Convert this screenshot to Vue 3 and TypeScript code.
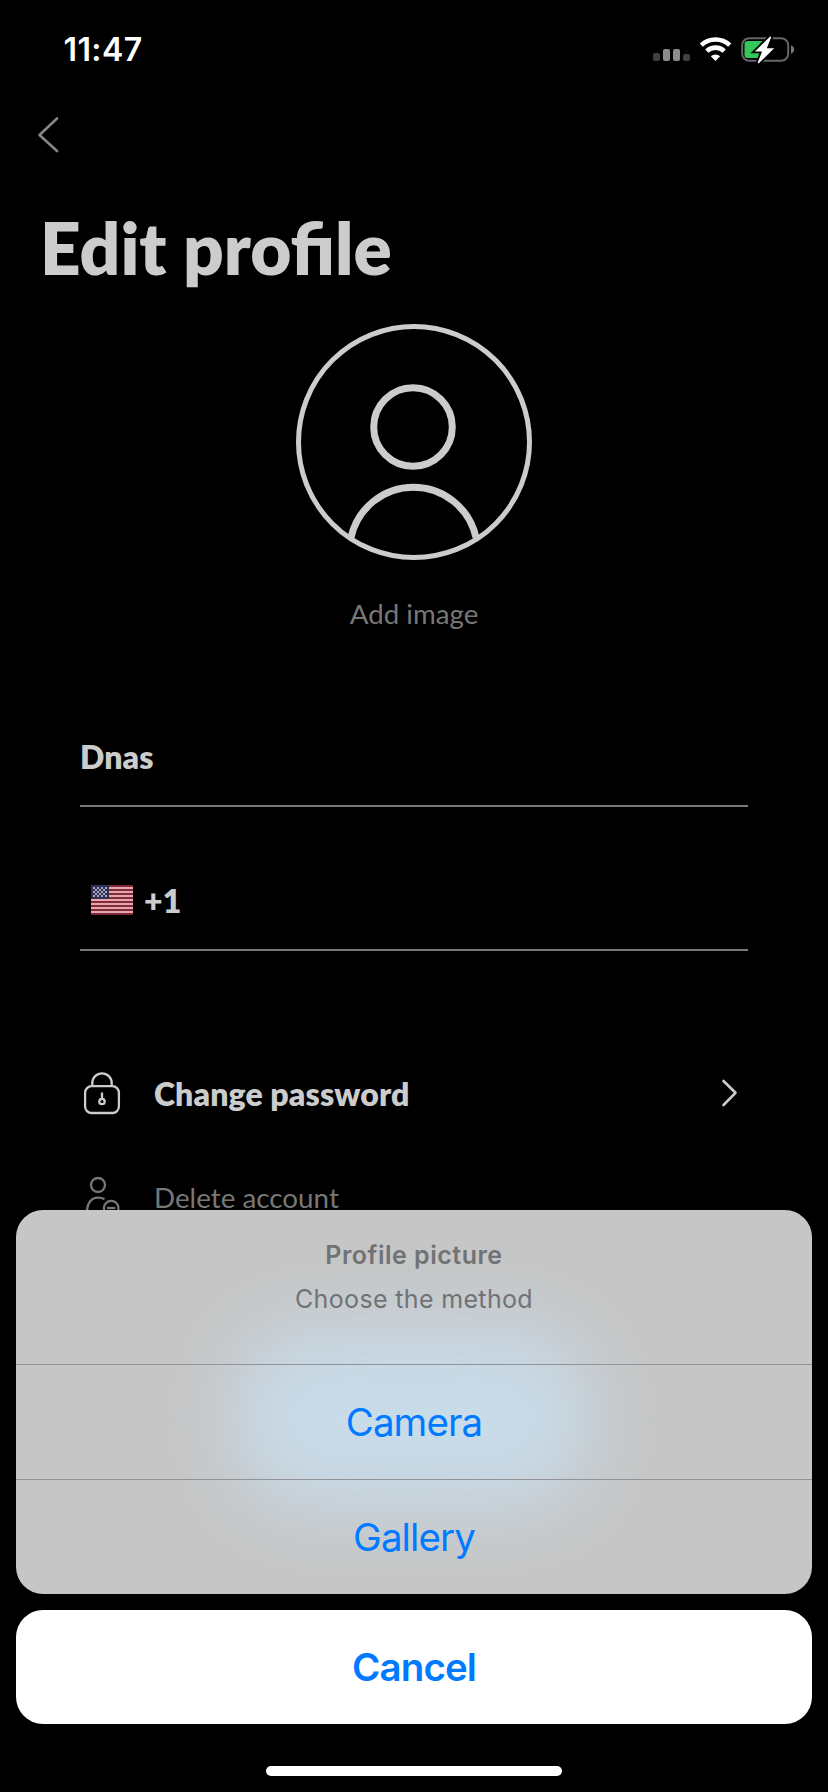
<script setup lang="ts">
interface SheetAction {
  id: string
  label: string
}

const time = '11:47'
const name = 'Dnas'
const dialCode = '+1'
const actions: SheetAction[] = [
  { id: 'camera', label: 'Camera' },
  { id: 'gallery', label: 'Gallery' },
]

const stripes = Array.from({ length: 7 }, (_, i) => 2 + i * 4)
const stars: { x: number; y: number }[] = []
for (let row = 0; row < 5; row++) {
  for (let col = 0; col < 7; col++) {
    if ((row + col) % 2 === 0) stars.push({ x: 2 + col * 2, y: 2 + row * 2 })
  }
}
</script>

<template>
  <div class="screen">
    <header class="status">
      <span class="time">{{ time }}</span>
      <svg class="indicators" width="148" height="32" viewBox="0 0 148 32">
        <g>
          <rect x="1" y="17" width="7" height="8" rx="2" fill="#404040" />
          <rect x="11" y="13" width="7" height="12" rx="2" fill="#8c8c8c" />
          <rect x="21" y="13" width="7" height="12" rx="2" fill="#8c8c8c" />
          <rect x="31" y="18" width="7" height="7" rx="2" fill="#404040" />
        </g>
        <g fill="none" stroke="#fff" stroke-width="4.6">
          <path d="M49.3 9.2a20.5 20.5 0 0 1 28.4 0" />
          <path d="M54.8 15.1a12.6 12.6 0 0 1 17.4 0" />
        </g>
        <path d="M63.5 25l-4.7-4.700a6.800 6.800 0 0 1 9.400 0z" fill="#fff" />
        <rect x="90.2" y="2.2" width="46" height="22.6" rx="7" fill="none" stroke="#666" stroke-width="2" />
        <path d="M139 9.2q3.2 1.4 3.2 4.3t-3.2 4.3z" fill="#777" />
        <path d="M95.500 5h15l-9 11.500h7.200l-1.500 5.500h-11.700q-3 0-3-3v-11q0-3 3-3z" fill="#34c759" />
        <path d="M117.800.8l-15 14.600h7.200l-4.200 10.900q-.2 1.500 1.200.8l15.200-14.900h-7.400l4.300-10.600q.1-1.600-1.300-.8z" fill="#fff" stroke="#000" stroke-width="3.500" paint-order="stroke" />
      </svg>
    </header>

    <nav class="nav">
      <svg class="back" width="28" height="44" viewBox="0 0 28 44" fill="none">
        <path d="M21 5.500L3.500 22l17.500 16" stroke="#858585" stroke-width="2.600" stroke-linecap="round" stroke-linejoin="round" />
      </svg>
    </nav>

    <h1 class="title">Edit profile</h1>

    <section class="avatar">
      <svg width="236" height="236" viewBox="0 0 236 236" fill="none" stroke="#ccc">
        <circle cx="118" cy="118" r="115.500" stroke-width="5" />
        <circle cx="117" cy="103" r="39.300" stroke-width="7" />
        <path d="M55 213.500a64 64 0 0 1 125 0" stroke-width="7" />
      </svg>
      <span class="add-image">Add image</span>
    </section>

    <section class="form">
      <div class="field name-field">{{ name }}</div>
      <div class="field phone-field">
        <svg class="flag" width="42" height="30" viewBox="0 0 42 30" shape-rendering="crispEdges">
          <rect width="42" height="30" fill="#7f2c39" />
          <rect v-for="y in stripes" :key="y" x="0" :y="y" width="42" height="2" fill="#e8a5ad" />
          <rect width="18" height="14" fill="#303056" />
          <rect v-for="s in stars" :key="`${s.x}-${s.y}`" :x="s.x" :y="s.y" width="2" height="2" fill="#a6a5bb" />
        </svg>
        <span>{{ dialCode }}</span>
      </div>
    </section>

    <section class="links">
      <div class="link password">
        <svg class="link-icon" width="40" height="44" viewBox="0 0 40 44" fill="none" stroke="#ccc" stroke-width="2.300">
          <rect x="3.100" y="14.200" width="33.800" height="26.800" rx="6.500" />
          <path d="M10.300 14v-3a9.700 9.700 0 0 1 19.400 0v3" />
          <circle cx="20" cy="29.500" r="2.700" />
          <path d="M20 26.500v-6" />
        </svg>
        <span class="link-label">Change password</span>
        <svg class="chevron" width="20" height="32" viewBox="0 0 20 32" fill="none">
          <path d="M3.500 3l12 11.800-12 12.200" stroke="#ccc" stroke-width="2.600" stroke-linecap="round" stroke-linejoin="round" />
        </svg>
      </div>
      <div class="link delete">
        <svg class="link-icon" width="40" height="44" viewBox="0 0 40 44" fill="none" stroke="#777" stroke-width="2.300">
          <circle cx="16" cy="9" r="7" />
          <path d="M5 36c0-9 4.500-14.300 11-14.300q3.500 0 6.500 1.400" />
          <circle cx="29.200" cy="32.200" r="7.300" />
          <path d="M25 32h8.400" />
        </svg>
        <span class="link-label">Delete account</span>
      </div>
    </section>

    <div class="overlay">
      <div class="sheet">
        <div class="sheet-head">
          <span class="sheet-title">Profile picture</span>
          <span class="sheet-text">Choose the method</span>
        </div>
        <button v-for="a in actions" :key="a.id" :class="['action', a.id]" type="button"><span>{{ a.label }}</span></button>
      </div>
      <button class="action cancel" type="button"><span>Cancel</span></button>
      <div class="home"></div>
    </div>
  </div>
</template>

<style>
html,
body {
  background: #000;
}
</style>

<style scoped>
.screen {
  position: relative;
  width: 828px;
  height: 1792px;
  overflow: hidden;
  display: flex;
  flex-direction: column;
  background: #000;
  color: #ccc;
  font-family: Lato, sans-serif;
}
.status {
  height: 96px;
  flex: none;
  box-sizing: border-box;
  padding: 34px 28px 0 63.5px;
  display: flex;
  justify-content: space-between;
  align-items: flex-start;
}
.time {
  font: 600 32px/32px Inter, sans-serif;
  letter-spacing: 0.4px;
  color: #fff;
}
.indicators {
  margin-top: 2px;
}
.nav {
  height: 112px;
  flex: none;
  box-sizing: border-box;
  padding: 17px 0 0 36px;
}
.back {
  display: block;
}
.title {
  margin: 0;
  height: 116px;
  flex: none;
  padding-left: 40px;
  font-size: 71px;
  font-weight: 800;
  line-height: 80px;
}
.avatar {
  height: 401px;
  flex: none;
  display: flex;
  flex-direction: column;
  align-items: center;
}
.add-image {
  margin-top: 36px;
  font-size: 27.7px;
  line-height: 36px;
  color: #777;
}
.form {
  padding: 0 80px;
  flex: none;
}
.field {
  box-sizing: border-box;
  border-bottom: 2px solid #777;
  font-size: 32px;
  font-weight: 800;
  line-height: 40px;
  letter-spacing: 0.12px;
}
.name-field {
  height: 82px;
  padding-top: 12px;
}
.phone-field {
  height: 144px;
  padding: 74px 0 0 11px;
  display: flex;
  align-items: flex-start;
  gap: 11px;
}
.flag {
  margin-top: 4px;
}
.links {
  padding: 119px 80px 0;
  flex: none;
}
.link {
  height: 48px;
  display: flex;
  align-items: center;
}
.link-icon {
  margin-left: 2px;
  flex: none;
}
.link-label {
  margin: 0 0 2px 32px;
  flex: 1;
  font-size: 32px;
  font-weight: 800;
  letter-spacing: 0.12px;
  white-space: nowrap;
}
.chevron {
  margin-right: 8px;
}
.delete {
  margin-top: 56px;
}
.delete .link-label {
  font-size: 27.8px;
  font-weight: 400;
  letter-spacing: 0;
  color: #777;
}
.overlay {
  position: absolute;
  inset: 1210px 16px 0;
  display: flex;
  flex-direction: column;
  font-family: Inter, sans-serif;
}
.sheet {
  position: relative;
  isolation: isolate;
  height: 384px;
  overflow: hidden;
  border-radius: 27px;
  display: flex;
  flex-direction: column;
  background: #c6c6c6;
}
.sheet::before {
  content: '';
  position: absolute;
  z-index: -1;
  left: 218px;
  top: 118px;
  width: 356px;
  height: 180px;
  border-radius: 70px;
  background: #c8dbe9;
  filter: blur(40px);
}
.sheet-head {
  height: 154px;
  flex: none;
  display: flex;
  flex-direction: column;
  align-items: center;
  padding-top: 27px;
  box-sizing: border-box;
  color: #707376;
  font-size: 25px;
  line-height: 36px;
}
.sheet-title {
  font-weight: 600;
  letter-spacing: 0.5px;
}
.sheet-text {
  margin-top: 8px;
  letter-spacing: 0.35px;
}
.action {
  height: 115px;
  flex: none;
  margin: 0;
  padding: 0;
  border: 0;
  border-top: 1px solid #919397;
  box-sizing: border-box;
  background: transparent;
  color: #007aff;
  font: 400 38.500px/44px Inter, sans-serif;
  letter-spacing: -0.9px;
}
.cancel {
  height: 114px;
  margin-top: 16px;
  border: 0;
  border-radius: 27px;
  background: #fff;
  font-weight: 600;
}
.home {
  width: 296px;
  height: 10px;
  margin: 42px auto 0;
  border-radius: 5px;
  background: #fff;
}
</style>
